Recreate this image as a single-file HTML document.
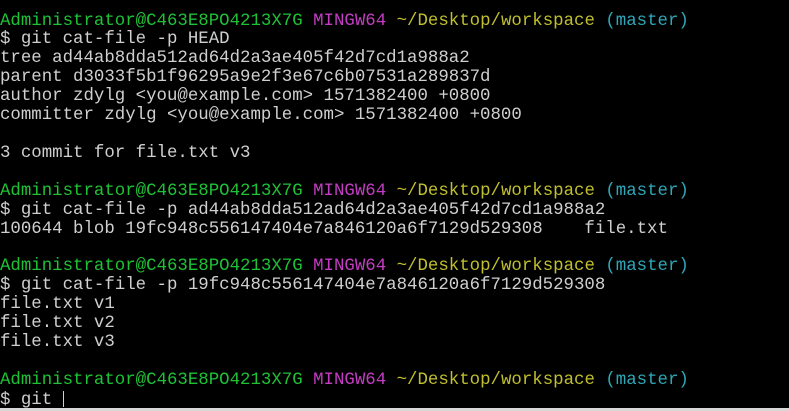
<!DOCTYPE html>
<html><head><meta charset="utf-8"><style>
html,body{margin:0;padding:0;width:789px;height:411px;overflow:hidden;background:#000}
pre{margin:0;position:absolute;left:0;top:12.5px;font-family:"Liberation Mono","DejaVu Sans Mono",monospace;font-size:17.4px;line-height:18.92px;color:#cfcfcf;letter-spacing:0}
.g{color:#1ec235}.m{color:#c43cc4}.y{color:#c0bf2e}.c{color:#2ea7b7}
.bar{position:absolute;left:0;top:408px;width:789px;height:3px;background:#d8d8d8}
.cur{display:inline-block;width:1px;height:16px;background:#cfcfcf;vertical-align:-3px}
</style></head><body>
<pre><span class="g">Administrator@C463E8PO4213X7G</span> <span class="m">MINGW64</span> <span class="y">~/Desktop/workspace</span> <span class="c">(master)</span>
$ git cat-file -p HEAD
tree ad44ab8dda512ad64d2a3ae405f42d7cd1a988a2
parent d3033f5b1f96295a9e2f3e67c6b07531a289837d
author zdylg &lt;you@example.com&gt; 1571382400 +0800
committer zdylg &lt;you@example.com&gt; 1571382400 +0800

3 commit for file.txt v3

<span class="g">Administrator@C463E8PO4213X7G</span> <span class="m">MINGW64</span> <span class="y">~/Desktop/workspace</span> <span class="c">(master)</span>
$ git cat-file -p ad44ab8dda512ad64d2a3ae405f42d7cd1a988a2
100644 blob 19fc948c556147404e7a846120a6f7129d529308    file.txt

<span class="g">Administrator@C463E8PO4213X7G</span> <span class="m">MINGW64</span> <span class="y">~/Desktop/workspace</span> <span class="c">(master)</span>
$ git cat-file -p 19fc948c556147404e7a846120a6f7129d529308
file.txt v1
file.txt v2
file.txt v3

<span class="g">Administrator@C463E8PO4213X7G</span> <span class="m">MINGW64</span> <span class="y">~/Desktop/workspace</span> <span class="c">(master)</span>
$ git <span class="cur"></span></pre>
<div class="bar"></div>
</body></html>
